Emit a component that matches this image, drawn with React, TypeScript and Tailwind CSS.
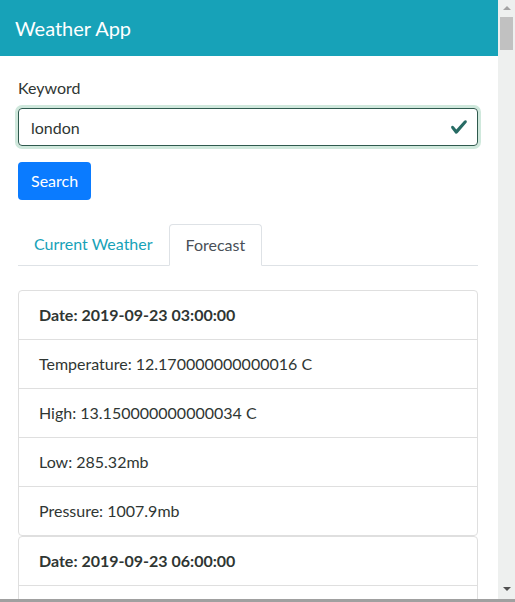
import { FC } from "react";

type Forecast = {
  date: string;
  temp: string;
  high: string;
  low: string;
  pressure: string;
};

const forecasts: Forecast[] = [
  {
    date: "2019-09-23 03:00:00",
    temp: "12.170000000000016 C",
    high: "13.150000000000034 C",
    low: "285.32mb",
    pressure: "1007.9mb",
  },
  {
    date: "2019-09-23 06:00:00",
    temp: "11.420000000000016 C",
    high: "12.150000000000034 C",
    low: "284.57mb",
    pressure: "1008.2mb",
  },
];

const CheckIcon: FC = () => (
  <svg viewBox="0 0 8 8" className="h-[18px] w-[18px]" fill="#276b64">
    <path d="M2.3 6.73L.6 4.53c-.4-1.04.46-1.4 1.1-.8l1.1 1.4 3.4-3.8c.6-.63 1.6-.27 1.2.7l-4 4.6c-.43.5-.8.4-1.1.1z" />
  </svg>
);

const ForecastCard: FC<{ item: Forecast }> = ({ item }) => {
  const rows = [
    `Temperature: ${item.temp}`,
    `High: ${item.high}`,
    `Low: ${item.low}`,
    `Pressure: ${item.pressure}`,
  ];
  return (
    <div className="rounded-[4px] border border-[#dfdfdf] bg-white">
      <div className="px-5 py-3 font-bold leading-6">Date: {item.date}</div>
      {rows.map((row) => (
        <div key={row} className="border-t border-[#dfdfdf] px-5 py-3 leading-6">
          {row}
        </div>
      ))}
    </div>
  );
};

// fake windows style scrollbar on the right
const ScrollBar: FC = () => (
  <div className="flex w-[17px] flex-col items-center bg-[#eef0ef]">
    <div className="mt-[6px] h-0 w-0 border-x-[4px] border-b-[4px] border-x-transparent border-b-[#a3a3a3]" />
    <div className="mt-[7px] h-[33px] w-[13px] bg-[#c1c1c1]" />
    <div className="flex-1" />
    <div className="mb-[8px] h-0 w-0 border-x-[4px] border-t-[4px] border-x-transparent border-t-[#505050]" />
  </div>
);

export default function App() {
  return (
    <div
      className="flex h-[602px] w-[515px] flex-col overflow-hidden bg-white text-[16px] text-[#2f3633]"
      style={{ fontFamily: '"Segoe UI", Lato, "Open Sans", sans-serif' }}
    >
      <div className="flex min-h-0 flex-1">
        <div className="min-w-0 flex-1 overflow-hidden">
          <header className="flex h-14 items-center bg-[#17a2b8] px-[15px]">
            <h1 className="text-[20px] text-white">Weather App</h1>
          </header>

          <main className="pl-[18px] pr-[20px] pt-5">
            <div className="mb-4">
              <label className="mb-2 block leading-6">Keyword</label>
              <div className="relative">
                <input
                  defaultValue="london"
                  className="h-[38px] w-full rounded-[4px] border border-[#2f5a4e] px-3 leading-6 underline decoration-[#9a9a9a] decoration-wavy underline-offset-[5px] shadow-[0_0_0_3px_#cfe8dc] outline-none"
                />
                <span className="absolute right-[10px] top-[10px]">
                  <CheckIcon />
                </span>
              </div>
            </div>

            <button className="h-[38px] rounded-[4px] bg-[#0a7bff] px-[13px] leading-6 text-white">
              Search
            </button>

            <nav className="mt-6 flex border-b border-[#dee2e6]">
              <a className="-mb-px px-4 py-2 leading-6 text-[#17a2b8]">Current Weather</a>
              <a className="-mb-px rounded-t-[4px] border border-[#dee2e6] border-b-white bg-white px-4 py-2 leading-6 text-[#495057]">
                Forecast
              </a>
            </nav>

            <div className="mt-6 flex flex-col">
              {forecasts.map((f) => (
                <ForecastCard key={f.date} item={f} />
              ))}
            </div>
          </main>
        </div>
        <ScrollBar />
      </div>
      <div className="h-[3px] bg-[#a0a0a0]" />
    </div>
  );
}
